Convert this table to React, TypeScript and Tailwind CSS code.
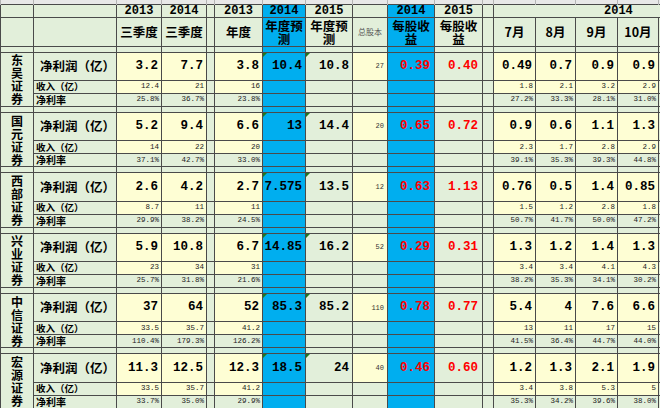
import React from "react";

type Bank = {
  name: string;
  profit: string[]; // 2013三季度, 2014三季度, 2013年度, 2014预测, 2015预测
  shares: string;
  eps: string[];
  months: string[];
  revenue: string[];
  revenueMonths: string[];
  margin: string[];
  marginMonths: string[];
};

const banks: Bank[] = [
  {
    name: "东吴证券",
    profit: ["3.2", "7.7", "3.8", "10.4", "10.8"],
    shares: "27",
    eps: ["0.39", "0.40"],
    months: ["0.49", "0.7", "0.9", "0.9"],
    revenue: ["12.4", "21", "16"],
    revenueMonths: ["1.8", "2.1", "3.2", "2.9"],
    margin: ["25.8%", "36.7%", "23.8%"],
    marginMonths: ["27.2%", "33.3%", "28.1%", "31.0%"],
  },
  {
    name: "国元证券",
    profit: ["5.2", "9.4", "6.6", "13", "14.4"],
    shares: "20",
    eps: ["0.65", "0.72"],
    months: ["0.9", "0.6", "1.1", "1.3"],
    revenue: ["14", "22", "20"],
    revenueMonths: ["2.3", "1.7", "2.8", "2.9"],
    margin: ["37.1%", "42.7%", "33.0%"],
    marginMonths: ["39.1%", "35.3%", "39.3%", "44.8%"],
  },
  {
    name: "西部证券",
    profit: ["2.6", "4.2", "2.7", "7.575", "13.5"],
    shares: "12",
    eps: ["0.63", "1.13"],
    months: ["0.76", "0.5", "1.4", "0.85"],
    revenue: ["8.7", "11", "11"],
    revenueMonths: ["1.5", "1.2", "2.8", "1.8"],
    margin: ["29.9%", "38.2%", "24.5%"],
    marginMonths: ["50.7%", "41.7%", "50.0%", "47.2%"],
  },
  {
    name: "兴业证券",
    profit: ["5.9", "10.8", "6.7", "14.85", "16.2"],
    shares: "52",
    eps: ["0.29", "0.31"],
    months: ["1.3", "1.2", "1.4", "1.3"],
    revenue: ["23", "34", "31"],
    revenueMonths: ["3.4", "3.4", "4.1", "4.3"],
    margin: ["25.7%", "31.8%", "21.6%"],
    marginMonths: ["38.2%", "35.3%", "34.1%", "30.2%"],
  },
  {
    name: "中信证券",
    profit: ["37", "64", "52", "85.3", "85.2"],
    shares: "110",
    eps: ["0.78", "0.77"],
    months: ["5.4", "4", "7.6", "6.6"],
    revenue: ["33.5", "35.7", "41.2"],
    revenueMonths: ["13", "11", "17", "15"],
    margin: ["110.4%", "179.3%", "126.2%"],
    marginMonths: ["41.5%", "36.4%", "44.7%", "44.0%"],
  },
  {
    name: "宏源证券",
    profit: ["11.3", "12.5", "12.3", "18.5", "24"],
    shares: "40",
    eps: ["0.46", "0.60"],
    months: ["1.2", "1.3", "2.1", "1.9"],
    revenue: ["33.5", "35.7", "41.2"],
    revenueMonths: ["3.4", "3.8", "5.3", "5"],
    margin: ["33.7%", "35.0%", "29.9%"],
    marginMonths: ["35.3%", "34.2%", "39.6%", "38.0%"],
  },
];

const widths = [33, 83, 45, 45, 8, 48, 43, 47, 35, 47, 48, 11, 42, 40, 42, 41, 2];

const td = "border border-[#4a4a4a] p-0 overflow-hidden";
const green = "bg-[#e2efda]";
const yellow = "bg-[#fefed4]";
const blue = "bg-[#00aeef]";
const big = "whitespace-nowrap text-right pr-[3px] font-['Liberation_Mono',monospace] text-[12.5px] font-bold text-black";
const small = "whitespace-nowrap text-right pr-[2px] font-['Liberation_Mono',monospace] text-[7.5px] leading-none text-[#222]";
const red = "whitespace-nowrap text-right pr-[4px] font-['Liberation_Mono',monospace] text-[12.5px] font-bold text-[#ff0000]";
const head = "text-center font-['Noto_Sans_CJK_SC',sans-serif] text-[12.5px] font-bold leading-[13px] text-black";
const year = "whitespace-nowrap text-center font-['Liberation_Mono',monospace] text-[12px] font-bold leading-none text-black";

function Flag() {
  return (
    <span className="absolute left-0 top-0 h-0 w-0 border-r-[4px] border-t-[4px] border-r-transparent border-t-[#1f7a1f]" />
  );
}

function Spacer() {
  return (
    <tr className="h-[6px]">
      {widths.map((_, i) => (
        <td key={i} className={`${td} ${i === 6 || i === 9 ? blue : green}`} />
      ))}
    </tr>
  );
}

function Group({ bank }: { bank: Bank }) {
  return (
    <>
      <Spacer />
      <tr className="h-[28.4px]">
        <td rowSpan={3} className={`${td} ${green} align-middle`}>
          <div className="flex flex-col items-center font-['Noto_Sans_CJK_SC',sans-serif] text-[12px] font-bold leading-[13px] text-black">
            {bank.name.split("").map((ch, i) => (
              <span key={i} className="block h-[13px]">
                {ch}
              </span>
            ))}
          </div>
        </td>
        <td className={`${td} ${green} whitespace-nowrap pl-[6px] font-['Noto_Sans_CJK_SC',sans-serif] text-[12.5px] font-bold text-black`}>
          净利润（亿）
        </td>
        <td className={`${td} ${yellow} ${big}`}>{bank.profit[0]}</td>
        <td className={`${td} ${yellow} ${big}`}>{bank.profit[1]}</td>
        <td className={`${td} ${green}`} />
        <td className={`${td} ${yellow} ${big}`}>{bank.profit[2]}</td>
        <td className={`${td} ${blue} ${big} relative`}>
          <Flag />
          {bank.profit[3]}
        </td>
        <td className={`${td} ${green} ${big} relative`}>
          <Flag />
          {bank.profit[4]}
        </td>
        <td className={`${td} ${yellow} whitespace-nowrap text-right pr-[3px] font-['Liberation_Mono',monospace] text-[7px] text-[#333]`}>
          {bank.shares}
        </td>
        <td className={`${td} ${blue} ${red}`}>{bank.eps[0]}</td>
        <td className={`${td} ${green} ${red}`}>{bank.eps[1]}</td>
        <td className={`${td} ${green}`} />
        {bank.months.map((m, i) => (
          <td key={i} className={`${td} ${yellow} ${big}`}>
            {m}
          </td>
        ))}
        <td className={`${td} ${green}`} />
      </tr>
      <tr className="h-[13px]">
        <td className={`${td} ${green} whitespace-nowrap pl-[2px] font-['Noto_Sans_CJK_SC',sans-serif] text-[9.5px] font-bold leading-none text-black`}>
          收入（亿）
        </td>
        <td className={`${td} ${yellow} ${small}`}>{bank.revenue[0]}</td>
        <td className={`${td} ${yellow} ${small}`}>{bank.revenue[1]}</td>
        <td className={`${td} ${green}`} />
        <td className={`${td} ${yellow} ${small}`}>{bank.revenue[2]}</td>
        <td className={`${td} ${blue}`} />
        <td className={`${td} ${green}`} />
        <td className={`${td} ${green}`} />
        <td className={`${td} ${blue}`} />
        <td className={`${td} ${green}`} />
        <td className={`${td} ${green}`} />
        {bank.revenueMonths.map((m, i) => (
          <td key={i} className={`${td} ${yellow} ${small}`}>
            {m}
          </td>
        ))}
        <td className={`${td} ${green}`} />
      </tr>
      <tr className="h-[13px]">
        <td className={`${td} ${green} whitespace-nowrap pl-[2px] font-['Noto_Sans_CJK_SC',sans-serif] text-[10px] font-bold leading-none text-black`}>
          净利率
        </td>
        <td className={`${td} ${green} ${small}`}>{bank.margin[0]}</td>
        <td className={`${td} ${green} ${small}`}>{bank.margin[1]}</td>
        <td className={`${td} ${green}`} />
        <td className={`${td} ${green} ${small}`}>{bank.margin[2]}</td>
        <td className={`${td} ${blue}`} />
        <td className={`${td} ${green}`} />
        <td className={`${td} ${green}`} />
        <td className={`${td} ${blue}`} />
        <td className={`${td} ${green}`} />
        <td className={`${td} ${green}`} />
        {bank.marginMonths.map((m, i) => (
          <td key={i} className={`${td} ${green} ${small}`}>
            {m}
          </td>
        ))}
        <td className={`${td} ${green}`} />
      </tr>
    </>
  );
}

export default function App() {
  return (
    <div className="h-[408px] w-[660px] overflow-hidden bg-white">
      <table className="w-[660px] table-fixed border-collapse">
        <colgroup>
          {widths.map((w, i) => (
            <col key={i} style={{ width: w }} />
          ))}
        </colgroup>
        <tbody>
          <tr className="h-[4px]">
            {widths.map((_, i) => (
              <td key={i} className="border-x border-[#b5b5b5] bg-[#e8e8e8] p-0" />
            ))}
          </tr>
          <tr className="h-[13px]">
            <td className={`${td} ${green}`} />
            <td className={`${td} ${green}`} />
            <td className={`${td} ${green} ${year}`}>2013</td>
            <td className={`${td} ${green} ${year}`}>2014</td>
            <td className={`${td} ${green}`} />
            <td className={`${td} ${green} ${year}`}>2013</td>
            <td className={`${td} ${blue} ${year}`}>2014</td>
            <td className={`${td} ${green} ${year}`}>2015</td>
            <td className={`${td} ${green}`} />
            <td className={`${td} ${blue} ${year}`}>2014</td>
            <td className={`${td} ${green} ${year}`}>2015</td>
            <td className={`${td} ${green}`} />
            <td colSpan={5} className={`${td} ${green} ${year} text-left pl-[110px]`}>
              2014
            </td>
          </tr>
          <tr className="h-[29px]">
            <td className={`${td} ${green}`} />
            <td className={`${td} ${green}`} />
            <td className={`${td} ${green} ${head} whitespace-nowrap`}>三季度</td>
            <td className={`${td} ${green} ${head} whitespace-nowrap`}>三季度</td>
            <td className={`${td} ${green}`} />
            <td className={`${td} ${green} ${head} whitespace-nowrap`}>年度</td>
            <td className={`${td} ${blue} ${head} break-all`}>年度预测</td>
            <td className={`${td} ${green} ${head} break-all`}>年度预测</td>
            <td className={`${td} ${green} whitespace-nowrap text-center font-['Noto_Sans_CJK_SC',sans-serif] text-[8px] text-[#555]`}>
              总股本
            </td>
            <td className={`${td} ${blue} ${head} break-all`}>每股收益</td>
            <td className={`${td} ${green} ${head} break-all`}>每股收益</td>
            <td className={`${td} ${green}`} />
            <td className={`${td} ${green} ${head} whitespace-nowrap`}>7月</td>
            <td className={`${td} ${green} ${head} whitespace-nowrap`}>8月</td>
            <td className={`${td} ${green} ${head} whitespace-nowrap`}>9月</td>
            <td className={`${td} ${green} ${head} whitespace-nowrap`}>10月</td>
            <td className={`${td} ${green}`} />
          </tr>
          {banks.map((b) => (
            <Group key={b.name} bank={b} />
          ))}
        </tbody>
      </table>
    </div>
  );
}
